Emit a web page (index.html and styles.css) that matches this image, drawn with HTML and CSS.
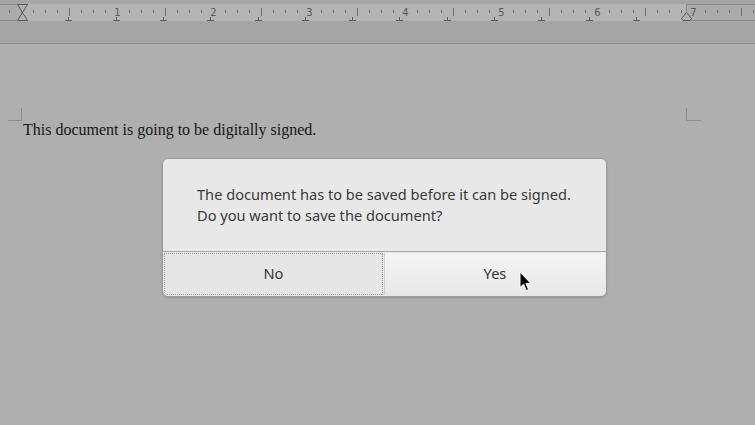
FILE: index.html
```html
<!DOCTYPE html>
<html>
<head>
<meta charset="utf-8">
<link rel="stylesheet" href="styles.css">
</head>
<body>
<div class="app">
  <div class="ruler-area">
    <div class="ruler-top"></div>
    <svg class="ruler" width="755" height="17" viewBox="0 0 755 17">
      <rect x="-2" y="0.5" width="23.5" height="16" fill="#ababab" stroke="#8c8c8c"/>
      <rect x="686.5" y="0.5" width="70" height="16" fill="#ababab" stroke="#8c8c8c"/>
      <path class="tick" d="M9.5 6v3M33.5 6v3M45.5 6v3M57.5 6v3M81.5 6v3M93.5 6v3M105.5 6v3M129.5 6v3M141.5 6v3M153.5 6v3M177.5 6v3M189.5 6v3M201.5 6v3M225.5 6v3M237.5 6v3M249.5 6v3M273.5 6v3M285.5 6v3M297.5 6v3M321.5 6v3M333.5 6v3M345.5 6v3M369.5 6v3M381.5 6v3M393.5 6v3M417.5 6v3M429.5 6v3M441.5 6v3M465.5 6v3M477.5 6v3M489.5 6v3M513.5 6v3M525.5 6v3M537.5 6v3M561.5 6v3M573.5 6v3M585.5 6v3M609.5 6v3M621.5 6v3M633.5 6v3M657.5 6v3M669.5 6v3M681.5 6v3M705.5 6v3M717.5 6v3M729.5 6v3M753.5 6v3"/>
      <path class="tick" d="M69.5 4v8M165.5 4v8M261.5 4v8M357.5 4v8M453.5 4v8M549.5 4v8M645.5 4v8M741.5 4v8"/>
      <g class="num">
        <text x="117.5" y="12">1</text>
        <text x="213.5" y="12">2</text>
        <text x="309.5" y="12">3</text>
        <text x="405.5" y="12">4</text>
        <text x="501.5" y="12">5</text>
        <text x="597.5" y="12">6</text>
        <text x="693.5" y="12">7</text>
      </g>
      <path class="tab" d="M68.5 13v3M65 16.5h7M116.5 13v3M113 16.5h7M163.5 13v3M160 16.5h7M210.5 13v3M207 16.5h7M258.5 13v3M255 16.5h7M305.5 13v3M302 16.5h7M352.5 13v3M349 16.5h7M399.5 13v3M396 16.5h7M447.5 13v3M444 16.5h7M494.5 13v3M491 16.5h7M541.5 13v3M538 16.5h7M589.5 13v3M586 16.5h7M636.5 13v3M633 16.5h7"/>
      <path class="marker" d="M17.5 0.5H27.5L22.5 8.5L27.5 16.5H17.5L22.5 8.5Z"/>
      <path class="marker" d="M686.5 8.5L691.5 14.5L690 16.5H683L681.5 14.5Z"/>
    </svg>
    <div class="ruler-bottom"></div>
  </div>
  <div class="page">
    <div class="doc">
      <p class="doc-text">This document is going to be digitally signed.</p>
    </div>
  </div>

  <div class="dialog">
    <div class="message">
      <p>The document has to be saved before it can be signed.</p>
      <p>Do you want to save the document?</p>
    </div>
    <div class="buttons">
      <button class="btn btn-no">No</button>
      <button class="btn btn-yes">Yes</button>
    </div>
  </div>

  <svg class="cursor" width="14" height="21" viewBox="0 0 14 21">
    <path d="M1 1V16.5L4.6 13.2L7.4 19.6L9.6 18.6L6.9 12.4H11.8Z" fill="#000" stroke="#fff" stroke-width="1" stroke-linejoin="round"/>
  </svg>
</div>
</body>
</html>
```
FILE: styles.css
```css
* { box-sizing: border-box; }
html, body {
  margin: 0;
  padding: 0;
  width: 755px;
  height: 425px;
  overflow: hidden;
  background: #afafaf;
}
.app {
  position: relative;
  width: 755px;
  height: 425px;
  background: #afafaf;
}
.ruler-area {
  display: flex;
  flex-direction: column;
}
.ruler-top {
  height: 4px;
  background: #a5a5a5;
}
.ruler {
  display: block;
  background: #b4b4b4;
}
.ruler .tick {
  stroke: #6e6e6e;
  stroke-width: 1;
  fill: none;
}
.ruler .num text {
  font-family: "DejaVu Sans", sans-serif;
  font-size: 10px;
  fill: #5a5a5a;
  text-anchor: middle;
}
.ruler .tab {
  stroke: #5e5e5e;
  stroke-width: 1;
  fill: none;
}
.ruler .marker {
  stroke: #5a5a5a;
  stroke-width: 1;
  fill: #b0b0b0;
}
.ruler-bottom {
  height: 23px;
  background: #a5a5a5;
  border-bottom: 1px solid #8e8e8e;
}
.page {
  padding-top: 64px;
}
.doc {
  position: relative;
  margin-left: 21px;
  width: 666px;
  padding-top: 13px;
}
.doc::before {
  content: "";
  position: absolute;
  left: -13px;
  top: 0;
  width: 13px;
  height: 12px;
  border-right: 1px solid #8d8d8d;
  border-bottom: 1px solid #8d8d8d;
}
.doc::after {
  content: "";
  position: absolute;
  right: -14px;
  top: 0;
  width: 14px;
  height: 12px;
  border-left: 1px solid #8d8d8d;
  border-bottom: 1px solid #8d8d8d;
}
.doc-text {
  margin: 0;
  padding-left: 2px;
  font-family: "Liberation Serif", serif;
  font-size: 16px;
  line-height: 18px;
  color: #161616;
}
.dialog {
  position: absolute;
  left: 162px;
  top: 158px;
  width: 445px;
  height: 139px;
  background: #e8e8e8;
  border: 1px solid #9c9c9c;
  border-radius: 6px;
  display: flex;
  flex-direction: column;
  box-shadow: 0 1px 2px rgba(0,0,0,0.15);
}
.message {
  padding: 25px 10px 25px 34px;
  font-family: "Noto Sans", sans-serif;
  font-size: 14.6px;
  line-height: 21px;
  color: #3a3a3a;
  white-space: nowrap;
}
.message p { margin: 0; }
.buttons {
  border-top: 1px solid #a8a8a8;
  display: grid;
  grid-template-columns: 219px 1fr;
  gap: 2px;
  padding: 1px 1px 1px 1px;
  flex: 1;
}
.btn {
  font-family: "Noto Sans", sans-serif;
  font-size: 14.6px;
  color: #333;
  border: 0;
  margin: 0;
  padding: 0 0 2px 0;
}
.btn-no {
  background: #e6e6e6;
  border: 1px dotted #9e9e9e;
  border-bottom-left-radius: 4px;
}
.btn-yes {
  background: linear-gradient(#f4f4f4, #e8e8e8);
  border-bottom-right-radius: 5px;
  box-shadow: -1px 0 0 #cfcfcf;
}
.cursor {
  position: absolute;
  left: 519px;
  top: 271px;
}
```
